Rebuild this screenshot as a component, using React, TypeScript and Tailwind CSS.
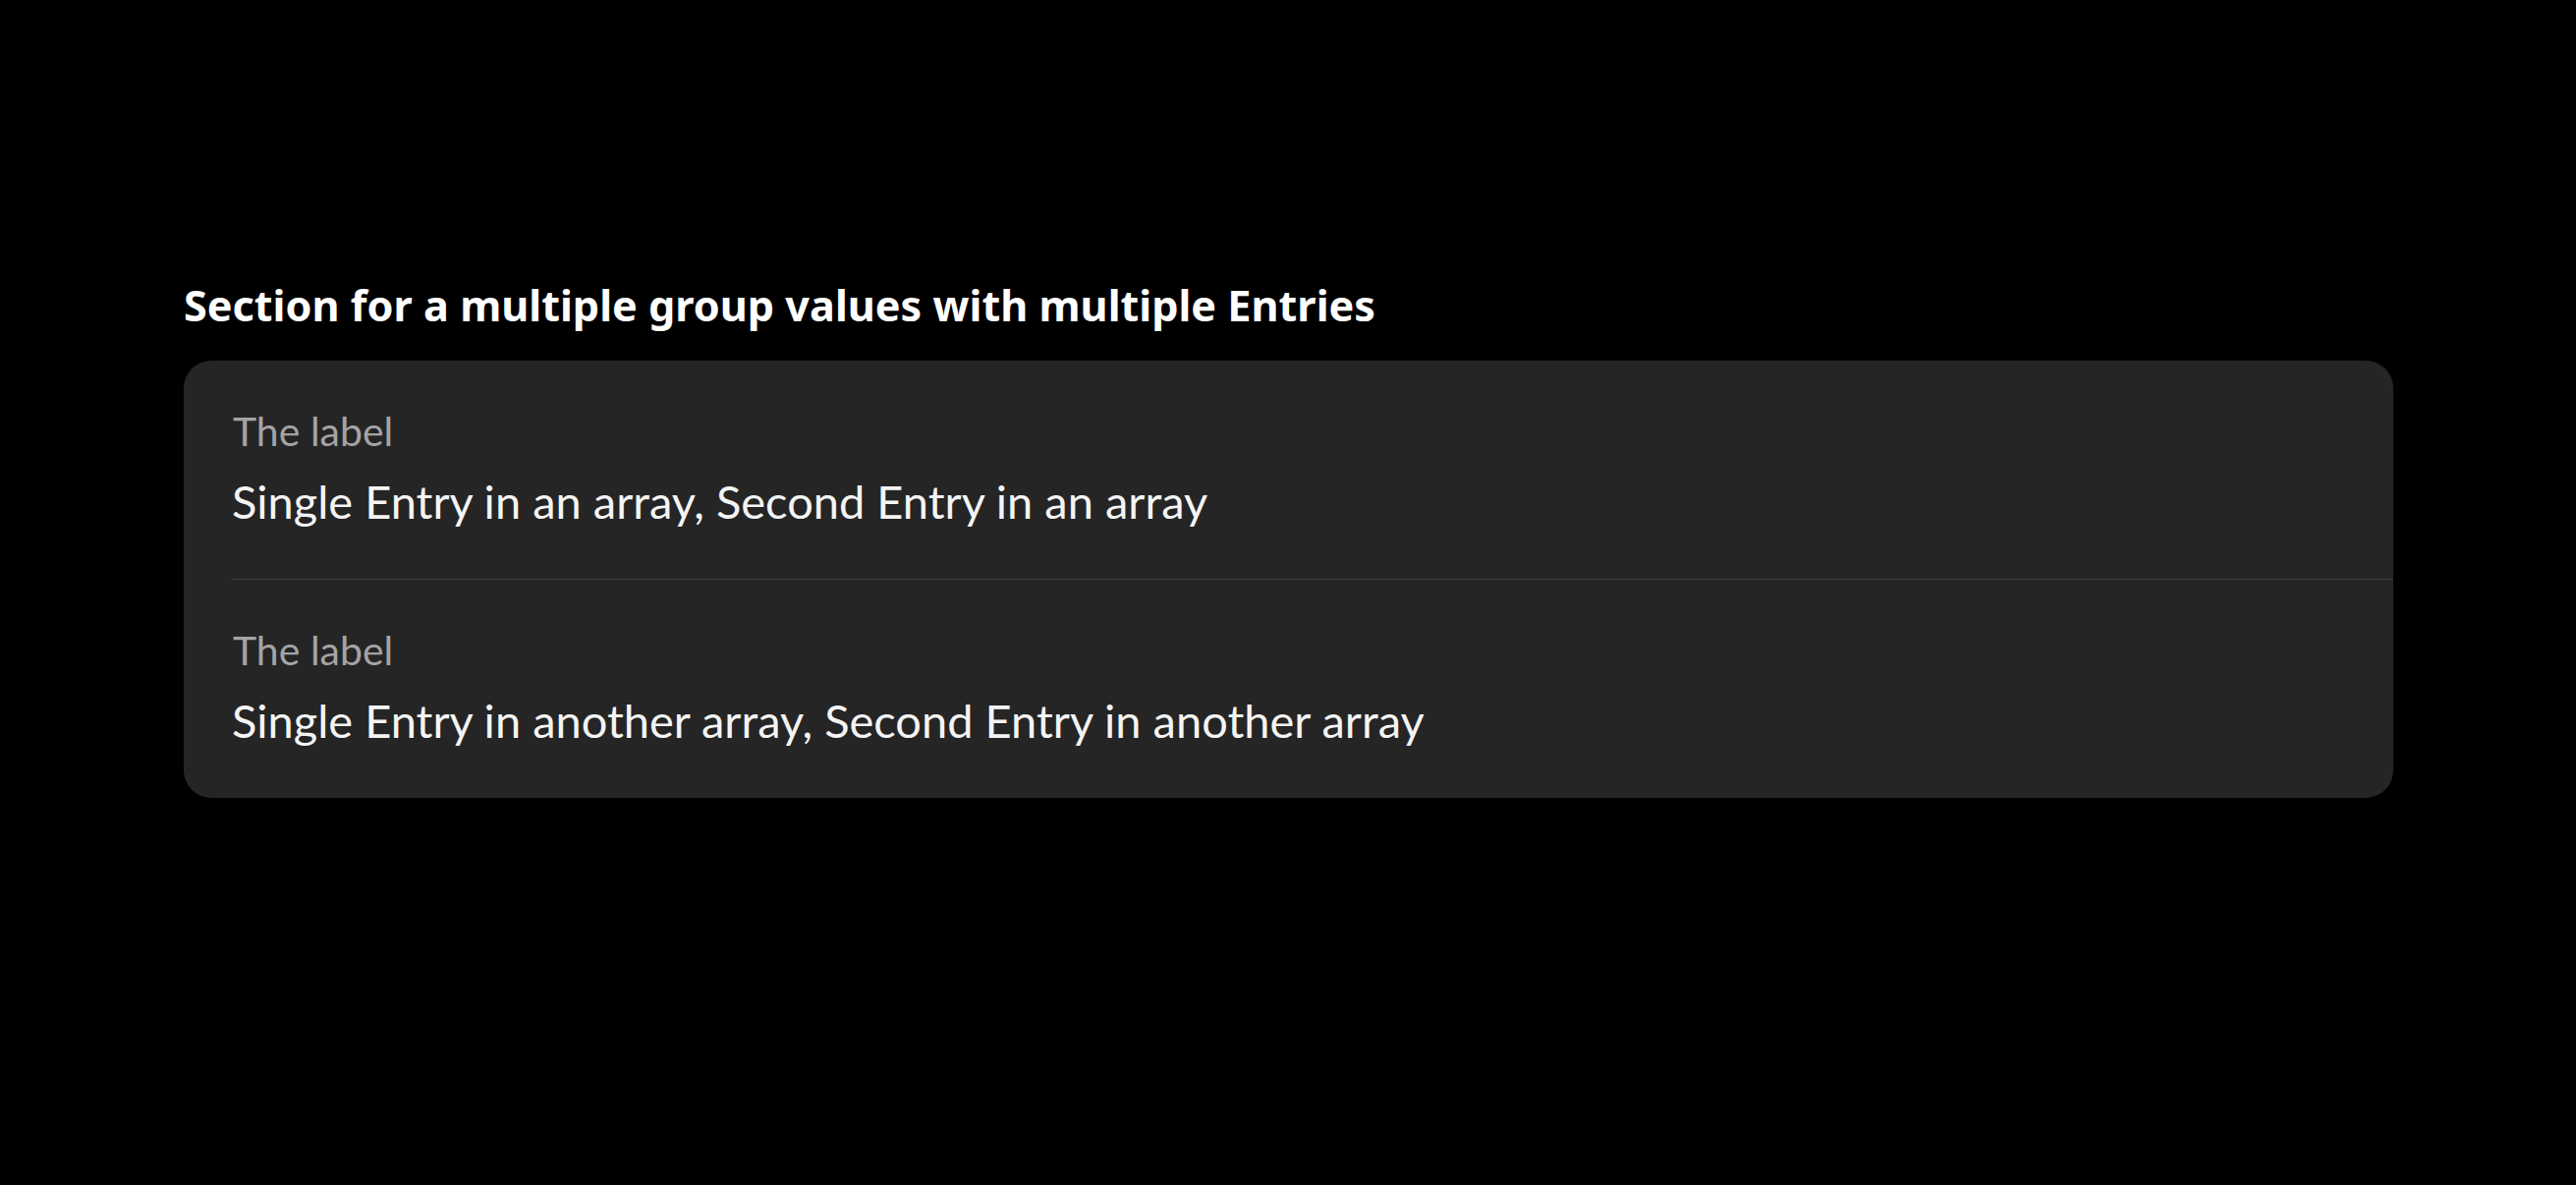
import React from "react";

type Field = {
  label: string;
  values: string[];
};

const fields: Field[] = [
  { label: "The label", values: ["Single Entry in an array", "Second Entry in an array"] },
  { label: "The label", values: ["Single Entry in another array", "Second Entry in another array"] },
];

const FieldRow: React.FC<{ field: Field; last: boolean }> = ({ field, last }) => (
  <div className={`pt-[48px] pb-[51px] pr-[50px] ${last ? "" : "border-b border-[#414141]"}`}>
    <div className="pl-[2px] font-['Lato',sans-serif] text-[41px] leading-[48px] text-[#a4a4a4]">
      {field.label}
    </div>
    <div className="mt-[19px] pl-[1px] font-['Lato',sans-serif] text-[47px] leading-[56px] text-[#f4f4f4]">
      {field.values.join(", ")}
    </div>
  </div>
);

export default function App() {
  return (
    <div className="min-h-screen bg-black pt-[285px] pl-[187px] pr-[186px]">
      <h2 className="mb-[30px] font-['Noto_Sans',sans-serif] text-[43.2px] leading-[52px] font-bold text-white">
        Section for a multiple group values with multiple Entries
      </h2>
      <div className="rounded-[28px] bg-[#252525] pl-[48px]">
        {fields.map((field, i) => (
          <FieldRow key={i} field={field} last={i === fields.length - 1} />
        ))}
      </div>
    </div>
  );
}
